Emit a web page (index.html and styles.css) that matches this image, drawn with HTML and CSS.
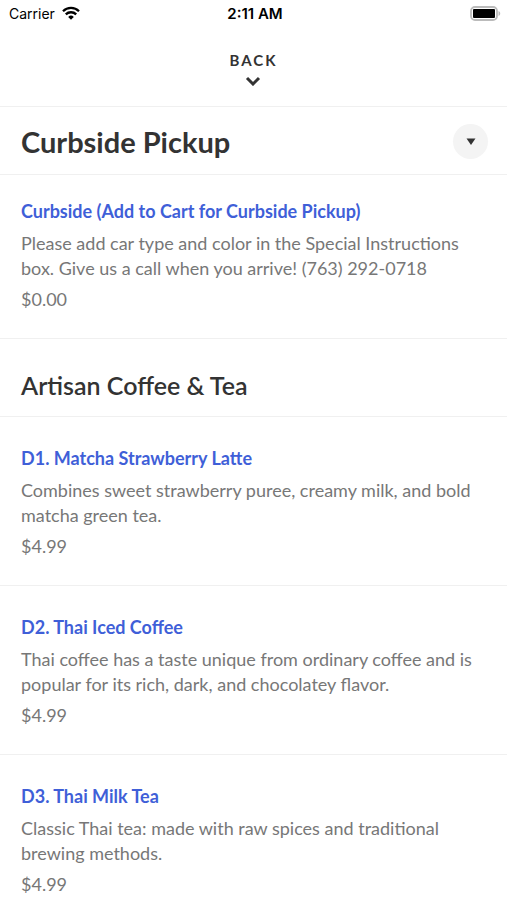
FILE: index.html
```html
<!DOCTYPE html>
<html lang="en">
<head>
    <meta charset="UTF-8">
    <meta name="viewport" content="width=device-width, initial-scale=1.0">
    <title>Menu</title>
    <link rel="stylesheet" href="styles.css">
</head>
<body>
    <div class="status-bar">
        <div class="carrier">
            <span>Carrier</span>
            <svg class="wifi" width="18" height="14" viewBox="0 0 18 14">
                <path d="M1 5.200a11.400 11.400 0 0 1 16 0M3.800 8.400a7.400 7.400 0 0 1 10.400 0" fill="none" stroke="#000" stroke-width="2.300"/>
                <path d="M9 13.800L6.200 10.900a4 4 0 0 1 5.600 0z"/>
            </svg>
        </div>
        <div class="time">2:11 AM</div>
        <div class="battery">
            <svg width="31" height="15" viewBox="0 0 31 15">
                <rect x="1" y="1" width="26" height="13" rx="4" fill="none" stroke="#bbb" stroke-width="1.800"/>
                <rect x="3" y="3" width="22" height="9" rx="1"/>
                <path d="M28.500 5c2.300 1 2.300 4 0 5z" fill="#bbb"/>
            </svg>
        </div>
    </div>

    <header class="top-nav">
        <button type="button" class="back-button">
            <span>BACK</span>
            <svg width="16" height="10" viewBox="0 0 16 10">
                <path d="M2 2L8 8L14 2" fill="none" stroke="#333" stroke-width="3"/>
            </svg>
        </button>
    </header>

    <main>
        <div class="category-bar">
            <h1>Curbside Pickup</h1>
            <button type="button" class="category-toggle" aria-label="Choose category">
                <svg width="10" height="7" viewBox="0 0 10 7">
                    <path d="M0.500 0.500h9L5 7z" fill="#333"/>
                </svg>
            </button>
        </div>

        <section class="menu-item first-item">
            <h3><a href="#">Curbside (Add to Cart for Curbside Pickup)</a></h3>
            <p>Please add car type and color in the Special Instructions box. Give us a call when you arrive! (763) 292-0718</p>
            <div class="price">$0.00</div>
        </section>

        <h2 class="category-title">Artisan Coffee &amp; Tea</h2>

        <section class="menu-item">
            <h3><a href="#">D1. Matcha Strawberry Latte</a></h3>
            <p>Combines sweet strawberry puree, creamy milk, and bold matcha green tea.</p>
            <div class="price">$4.99</div>
        </section>

        <section class="menu-item">
            <h3><a href="#">D2. Thai Iced Coffee</a></h3>
            <p>Thai coffee has a taste unique from ordinary coffee and is popular for its rich, dark, and chocolatey flavor.</p>
            <div class="price">$4.99</div>
        </section>

        <section class="menu-item">
            <h3><a href="#">D3. Thai Milk Tea</a></h3>
            <p>Classic Thai tea: made with raw spices and traditional brewing methods.</p>
            <div class="price">$4.99</div>
        </section>
    </main>
</body>
</html>
```

FILE: styles.css
```css
* {
    box-sizing: border-box;
}

body {
    margin: 0;
    background: #fff;
    color: #333;
    font-family: Lato, "Liberation Sans", sans-serif;
}

h1, h2, h3, p {
    margin: 0;
}

.status-bar {
    display: grid;
    grid-template-columns: 1fr auto 1fr;
    align-items: center;
    height: 26px;
    padding: 0 6px 0 9px;
    color: #000;
    font-family: Inter, sans-serif;
    font-size: 14px;
}

.carrier {
    display: flex;
    align-items: center;
    gap: 7px;
}

.time {
    font-size: 15px;
    font-weight: 600;
}

.battery {
    display: flex;
    justify-content: flex-end;
}

.top-nav {
    display: flex;
    justify-content: center;
    height: 81px;
    padding-top: 23px;
    border-bottom: 1px solid #f0f0f0;
}

.back-button {
    display: flex;
    flex-direction: column;
    align-items: center;
    gap: 5px;
    height: 40px;
    padding: 0;
    border: 0;
    background: none;
    color: #333;
    font-family: inherit;
    font-size: 15px;
    font-weight: 700;
    line-height: 22px;
    letter-spacing: 2px;
}

.category-bar {
    display: flex;
    align-items: center;
    justify-content: space-between;
    height: 68px;
    padding: 2px 19px 0 21px;
    border-bottom: 1px solid #f0f0f0;
}

.category-bar h1 {
    font-size: 29px;
    font-weight: 700;
}

.category-toggle {
    display: flex;
    align-items: center;
    justify-content: center;
    width: 35px;
    height: 35px;
    padding: 0;
    border: 0;
    border-radius: 50%;
    background: #f4f4f4;
}

.menu-item {
    padding: 29px 21px 26px;
    border-bottom: 1px solid #f0f0f0;
    color: #777;
    font-size: 18px;
    line-height: 25px;
}

.menu-item.first-item {
    padding-top: 24px;
}

.menu-item h3 {
    margin-bottom: 7px;
    font-size: 18px;
    font-weight: 700;
}

.menu-item a {
    color: #3f5fd8;
    text-decoration: none;
}

.price {
    margin-top: 6px;
}

.category-title {
    padding: 31px 21px 15px;
    border-bottom: 1px solid #f0f0f0;
    font-size: 25px;
    font-weight: 600;
    line-height: 31px;
}
```
